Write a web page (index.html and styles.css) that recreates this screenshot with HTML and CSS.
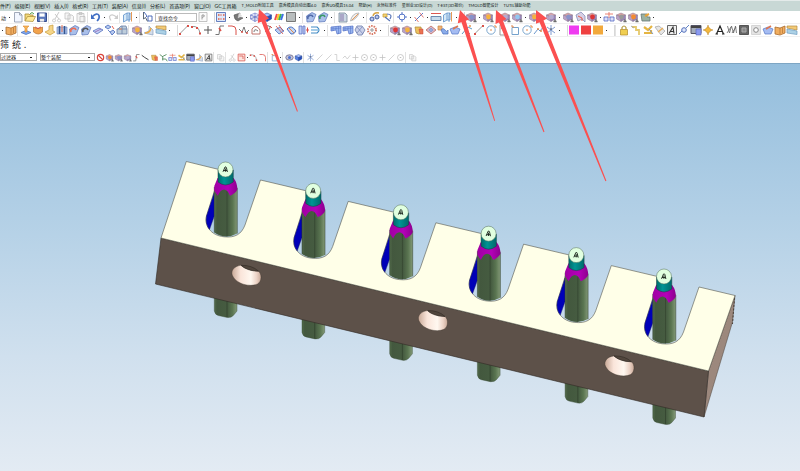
FILE: index.html
```html
<!DOCTYPE html>
<html>
<head>
<meta charset="utf-8">
<title>NX</title>
<link rel="stylesheet" href="styles.css">
</head>
<body>
<div class="app">
  <nav class="menu">
    <a href="#">件(<u>F</u>)</a><a href="#">编辑(<u>E</u>)</a><a href="#">视图(<u>V</u>)</a><a href="#">插入(<u>I</u>)</a><a href="#">格式(<u>R</u>)</a><a href="#">工具(<u>T</u>)</a><a href="#">装配(<u>A</u>)</a><a href="#">信息(<u>I</u>)</a><a href="#">分析(<u>L</u>)</a><a href="#">首选项(<u>P</u>)</a><a href="#">窗口(<u>O</u>)</a><a href="#">GC工具箱</a><a class="addon" href="#">T_MOLD附加工具</a><a class="addon" href="#">嘉秀模具自动出图4.0</a><a class="addon" href="#">嘉秀UG模具15.04</a><a class="addon" href="#">帮助(<u>H</u>)</a><a class="addon" href="#">永恒标准件</a><a class="addon" href="#">星创业3D设计(<u>D</u>)</a><a class="addon" href="#">T-EST(3D报价)</a><a class="addon" href="#">TMOLD智能设计</a><a class="addon" href="#">TUTIL辅助功能</a>
  </nav>
  <div class="bar">
    <button class="start" type="button">动</button>
    <div class="tools" data-icons=". new open save | cut copy paste | undo . redo | sheet . | pick"></div>
    <input class="search" type="text" value="查找命令" aria-label="查找命令">
    <div class="tools" data-icons="find || grid . half . wire cube rainbow square . | part partg . | slab swoosh . | gears keys | target . line . ruler sheet . || ball . ballY . ballT ballB . ballY . ballT . ball sheetR ballR . links ballG ballO puzzle ."></div>
  </div>
  <div class="bar">
    <div class="tools" data-icons=". book | extrude bowl slabY holes partO partG plane planes prism | ballY corner fold . || seg arc cross step fillet zig profile curl hatch rings mirror tube . | mesh mesh hexmesh dots . || ballR ballY pot diamond blobs boat tri seg circ pt rect circ spline spark . || magenta red orange . || | lock steps flower pen letter chain window star text noise gear nut boat book fold"></div>
  </div>
  <div class="bar groups">
    <button type="button">筛</button><button type="button">统</button><span>.</span>
  </div>
  <div class="bar filters">
    <select class="type" aria-label="过滤器"><option>过滤器</option></select>
    <select class="scope" aria-label="整个装配"><option>整个装配</option></select>
    <div class="tools small" data-icons="ban ballO ball ballT step zigk pot grab links flower window corner letter | copy | cut snap . arc fillet | rect . | eye cube | spark lineg lineg stepg zigg crossg ringg ringg crossg lineg ringg | copy"></div>
  </div>
  <main class="stage">
    <svg viewBox="0 63 800 408" role="img" aria-label="模型">
      <defs>
        <linearGradient id="pin"><stop offset="0" stop-color="#526b4b"/><stop offset=".12" stop-color="#43583e"/><stop offset=".6" stop-color="#465c41"/><stop offset=".8" stop-color="#5a7551"/><stop offset="1" stop-color="#839977"/></linearGradient>
        <linearGradient id="teal"><stop offset="0" stop-color="#006b6b"/><stop offset=".4" stop-color="#009494"/><stop offset="1" stop-color="#006a6b"/></linearGradient>
        <linearGradient id="mag"><stop offset="0" stop-color="#a000a3"/><stop offset=".6" stop-color="#b400b8"/><stop offset="1" stop-color="#8d008e"/></linearGradient>
        <linearGradient id="bore"><stop offset="0" stop-color="#c8a997"/><stop offset=".3" stop-color="#fae5da"/><stop offset=".65" stop-color="#fff8f0"/><stop offset=".85" stop-color="#ecd3c6"/><stop offset="1" stop-color="#c9aa99"/></linearGradient>
        <g id="leg"><path d="M214.3 285V311q1 4 4 4.500l9 2q4 .5 6-2l3.700-4.500V285z" fill="url(#pin)" stroke="#34462f" stroke-width=".4"/><path d="M227 285v32" stroke="#2c3a28" stroke-width=".6"/></g>
        <g id="post">
          <path d="M214.300 192.500L206.500 216Q205 224 209.500 229.500L214.300 216z" fill="#0000b8" stroke="#181850" stroke-width=".4"/>
          <path d="M214.300 187V232.500Q225 240 237.300 233.500V187z" fill="url(#pin)"/>
          <path d="M214.300 187v45.500M227 191v45.500M237.300 188v45.500" stroke="#2c3a28" stroke-width=".5" fill="none"/>
          <path d="M217.600 178L214.300 186v4.500Q216 193.500 217.800 195.700Q220.500 189.500 224 189.500Q227.500 189.500 230 195.700Q235.500 193.500 237.300 189.500Q237.500 183 233.600 178z" fill="url(#mag)"/>
          <path d="M218 170v12q7.500 6 15.300 0V170z" fill="url(#teal)" stroke="#143f3f" stroke-width=".5"/>
          <circle cx="225.500" cy="169.500" r="7.500" fill="#e1ffe0" stroke="#536b55" stroke-width=".5"/>
          <path d="M223 171.800l2-4.800q1.200-.5 1.400.6l1 4.400M223.500 170.500h3.500M225.400 168.500v3.300" fill="none" stroke="#172018" stroke-width=".9"/>
        </g>
        <g id="hole"><path d="M241 265.300C234 266 230.500 271 232.400 275.500C236 284 250 287.500 257.500 284C262 281.500 262 274 258.500 271.200Q251 271 246 268.500Q242.500 267 241 265.300z" fill="url(#bore)" stroke="#382f28" stroke-width=".4"/><path d="M241 265.300Q252 265 258.500 271.200Q247 271 241 265.300z" fill="#51463d" stroke="#211b17" stroke-width=".4"/></g>
      </defs>
      <use href="#leg"/><use href="#leg" x="87.700" y="21.400"/><use href="#leg" x="175.400" y="42.800"/><use href="#leg" x="263.100" y="64.200"/><use href="#leg" x="350.800" y="85.600"/><use href="#leg" x="438.500" y="107"/>
      <path d="M708.500 371L735 295.500L732.500 322L704 417z" fill="#9c887d" stroke="#4b4039" stroke-width=".5"/>
      <path d="M734.500 298l-2 26" stroke="#4b4039" stroke-dasharray="2 1.500"/>
      <path d="M161 238L708.500 371L704 417L155.500 284z" fill="#5d5149" stroke="#302a25" stroke-width=".6"/>
      <path d="M186.300 161.500L221 170
        l-14.500 46c-2.500 9 4 19.500 17.500 20.800c11 1.200 17.500-2.500 21-11.800l15.500-45l48.200 11.400
        l-14.500 46c-2.500 9 4 19.500 17.500 20.800c11 1.200 17.500-2.500 21-11.800l15.500-45l48.200 11.400
        l-14.500 46c-2.500 9 4 19.500 17.500 20.800c11 1.200 17.500-2.500 21-11.800l15.500-45l48.200 11.400
        l-14.500 46c-2.500 9 4 19.500 17.500 20.800c11 1.200 17.500-2.500 21-11.800l15.500-45l48.200 11.400
        l-14.500 46c-2.500 9 4 19.500 17.500 20.800c11 1.200 17.500-2.500 21-11.800l15.500-45l48.200 11.400
        l-14.500 46c-2.500 9 4 19.500 17.500 20.800c11 1.200 17.500-2.500 21-11.800l15.500-45
        L735 295.500L708.500 371L161 238z" fill="#ffffe8" stroke="#56564c" stroke-width=".6"/>
      <use href="#post"/><use href="#post" x="87.700" y="21.400"/><use href="#post" x="175.400" y="42.800"/><use href="#post" x="263.100" y="64.200"/><use href="#post" x="350.800" y="85.600"/><use href="#post" x="438.500" y="107"/>
      <use href="#hole"/><use href="#hole" x="186.500" y="45.300"/><use href="#hole" x="373" y="90.600"/>
    </svg>
  </main>
  <svg class="arrows" viewBox="0 0 800 471" aria-hidden="true">
    <g fill="#fb5050">
      <path d="M259 9L269 18.500L265.500 20.300L297.900 111.300L297 111.700L261.500 21.800L257.800 23z"/>
      <path d="M460 10L469 19.500L465.800 20.800L495.100 120.800L494.300 121.100L461.500 22.200L457.800 23.300z"/>
      <path d="M496 10L506.500 19L503 20.800L544.500 131.800L543.500 132.200L499 22.600L495.500 24z"/>
      <path d="M536 10L547 18.500L543.500 20.500L606.400 180.800L605.400 181.200L539.500 22.200L536 23.800z"/>
    </g>
  </svg>
</div>
<script src="toolbar.js"></script>
</body>
</html>
```
FILE: styles.css
```css
* { box-sizing: border-box; }
body {
  margin: 0;
  background: #fff;
  color: #222;
  font-family: Lato, "Noto Sans CJK SC", sans-serif;
  font-size: 5px;
}
.app { position: relative; display: flex; flex-direction: column; min-height: 100vh; }
.menu {
  display: flex;
  align-items: center;
  gap: 4px;
  height: 11px;
  background: #c8d8d5;
  border-top: 1px solid #e4ebea;
  white-space: nowrap;
  overflow: hidden;
}
.menu a { color: #101818; text-decoration: none; line-height: 8px; }
.menu u { text-decoration: none; }
.menu .addon { font-size: 4px; margin-left: 1px; }
.bar {
  display: flex;
  align-items: center;
  height: 13px;
  overflow: hidden;
  border-bottom: 1px solid #f0f0f0;
}
button, input, select { font: inherit; color: inherit; margin: 0; padding: 0; border: 0; background: none; }
.start { width: 7px; }
.tools { display: flex; align-items: center; flex: none; }
.tools button { display: block; width: 12px; height: 12px; }
.tools svg { display: block; width: 100%; height: 100%; }
.dot { width: 5px; display: flex; justify-content: center; }
.dot::before { content: ""; width: 1px; height: 1px; background: #333; }
.sep { width: 3px; height: 11px; border-left: 1px solid #e2e2e2; }
.sep.wide { width: 6px; border-left: 0; border-right: 1px solid #d8d8d8; }
.small button { width: 9px; height: 9px; }
.small .dot { width: 3px; }
.search { width: 42px; height: 9px; padding-left: 2px; margin-left: 1px; border: 1px solid #bbb; }
.groups { font-size: 9px; gap: 3px; height: 14px; color: #222; border: 0; }
.filters { height: 12px; border: 0; }
select {
  appearance: none;
  height: 8px;
  border: 1px solid #aaa;
  border-radius: 0;
  background: linear-gradient(#222, #222) right 4px center / 2px 1px no-repeat, #fff;
}
.type { width: 37px; }
.scope { width: 55px; margin: 0 1px 0 3px; }
.stage {
  flex: 1;
  background: linear-gradient(#94bedd, #b3d0e6 38%, #d0e0ee 72%, #e3ebf3);
  box-shadow: inset 0 1px #7ea6c4;
}
.stage svg { display: block; width: 100%; }
.arrows { position: absolute; top: 0; left: 0; width: 100%; pointer-events: none; }
```
FILE: toolbar.js
```js
// Icon shapes are drawn on a 12 x 12 grid.
const p = (d, stroke = "#777", fill = "none", w = 1) =>
  `<path d="${d}" fill="${fill}" stroke="${stroke}" stroke-width="${w}"/>`;
const box = (top, left, right, line) =>
  p("M1.500 4L6 2l4.500 2L6 6z", line, top, .5) +
  p("M1.500 4L6 6v4.500L1.500 8z", line, left, .5) +
  p("M10.500 4L6 6v4.500L10.500 8z", line, right, .5);
const ball = (c) => box("#e3a5a0", "#b9a0c6", "#9884bb", "#85758f") +
  `<circle cx="6.500" cy="6" r="2.400" fill="${c}"/>` + p("M8.500 11l1.500-3 1.500 3z", "#555", "#777", .4);
const part = (c) => p("M1.500 5L7 1.500l4 2L8 10.500 2 11z", "#5873b8", "#a9bfea", .7) +
  p("M3 8a2.500 2.500 0 0 1 5-2", c, "none", 1.600);
const sq = (c) => `<rect x="1" y="1.500" width="10" height="9" fill="${c}"/>`;

const icons = {
  new: p("M2.500 1.500h5l2.500 2.500v7H2.500zM7.500 1.500V4H10", "#8b96a8", "#f2f6ff", .8),
  open: p("M1 10V3h4l1 1h3v2", "#a98b34", "#f3d97c", .8) + p("M1 10l2.500-4.500h8L9 10.500z", "#a98b34", "#ffe894", .7) + p("M6 3q2-3 4 0", "#55a04a"),
  save: p("M1.500 2h9v8.500h-9z", "#384f8f", "#5a78bd") + p("M3.500 2.500h5v3h-5z", "#fff", "#fff", .3) + p("M4 8h4v2.500H4z", "#ddd", "#eee", .3),
  cut: p("M8 1L4 8M4 3l4 5M3 8a1.500 1.500 0 1 0 .1 0M8 8a1.500 1.500 0 1 0 .1 0", "#bbb", "none", .8),
  copy: p("M2 2h4l1 1v5H2zM5 4h4l1.500 1.500v5H5z", "#bbb", "#f6f6f6", .7),
  paste: p("M2 2.500h7v8H2zM4 1.500h3v2H4zM5 5.500h5v5.500H5z", "#bbb", "#f3f3f3", .7),
  undo: p("M2 6q5-5 7-1.500 1 3-2 5.500", "#416fc4", "none", 1.600) + p("M1 3v5h4z", "none", "#416fc4"),
  redo: p("M9.500 6q-5-4-7-.5 0 2 1.500 4", "#ccc", "none", 1.200) + p("M11 3.500V8H7z", "none", "#ccc"),
  sheet: p("M1.500 4L5 2v7L1.500 11zM5 2h3v7H5M8 2l-1 2v7", "#5d8fc9", "#d7eaf8", .8) + p("M9.500 1v9.500", "#e59a55"),
  sheetR: p("M2 4l5-3 4 4v6l-3-3-4 2z", "#8790b8", "#d8d0e5", .8) + p("M4 5l4 2v3", "#e45b4b"),
  pick: p("M2 1l3 4-1 1M6 5h4v5H6z", "#3c5fb2", "none", .9) + p("M1.500 1v7l2-1.500 2 4", "#345", "#fff", .8),
  find: p("M2 1.500h8v9H2z", "#aaa", "#fafafa", .7) + p("M5 8.500V4h2q1.500 1.500-2 2.500", "#888", "none", .8),
  grid: p("M1.500 1.500h9v9h-9z", "#4262ae", "#dfe8fa", .8) + p("M3 4h1.500M5.500 4h1M8 4h1.500M3 8h1.500M5.500 8h1M8 8h1.500", "#e05b3f", "none", 1.500),
  half: p("M2 4L8 2 7 6l4 1-5 3q-4-1-4-6z", "#555", "#777", .6) + p("M7 2l3 3-4 2z", "#ddd", "#ddd", .3),
  wire: box("#eef", "#dde", "#dde", "#4a5cbc") + p("M1.500 8L6 6l4.500 2M6 2v4", "#4a5cbc", "none", .6),
  cube: box("#a9c1ff", "#5480e8", "#244ebc", "#244089"),
  rainbow: p("M2 9l2-6", "#f04b52", "none", 2) + p("M4 9l2-6", "#ffc928", "none", 2) + p("M6 9l2-6", "#3cb94b", "none", 2) + p("M8 9l2-6", "#3e71e3", "none", 2),
  square: p("M1.500 1.500h9v9h-9z", "#777", "#b9bebe", 1),
  part: part("#5069a8"), partg: part("#389864"), partO: part("#ee6c51"), partG: part("#555"),
  slab: p("M2 2h6l2 2v7H2z", "#789", "#ccd8e5", .8) + p("M4 3v7M6 3v7", "#87a"),
  swoosh: p("M1.500 10Q3 2 10 2 8 8 1.500 10", "#aaa", "#eee", .8) + p("M3 9l6-6", "#e89a59"),
  gears: p("M1 8a2 2 0 1 0 4 0 2 2 0 1 0-4 0M6 6a2 2 0 1 0 4 0 2 2 0 1 0-4 0", "#4660a3", "#b7c6e9", 1) + p("M4 5q1-4 6-3", "#d7a342", "none", 1.400),
  keys: p("M2 3h4v3H2z", "#cba13b", "#f3d472", .8) + p("M4 6l5 4M6 3q6 0 3 5", "#5875b6", "none", 1.200),
  target: p("M3 6a3 3 0 1 0 6 0 3 3 0 1 0-6 0M6 1v3M6 8v3M1 6h3M8 6h3", "#5978c9", "none", 1),
  line: p("M2 10l8-8", "#5978c9") + p("M1.500 6l4 5M6.500 1.500l4 5", "#dc5851", "none", .8),
  ruler: p("M1 2.500h10", "#dc5851") + p("M1 5.500h10v4H1z", "#51719e", "#c7dced", .8),
  ball: ball("#8893c9"), ballY: ball("#f5b33e"), ballT: ball("#b5accf"), ballB: ball("#93c6f0"), ballR: ball("#dd3636"), ballG: ball("#999"), ballO: ball("#f28b31"),
  links: p("M1 6h4v4H1zM7 6h4v4H7z", "#5367c2", "#dce1fa", .8) + p("M2 3h8M6 1v6", "#e36552", "none", .8),
  puzzle: p("M2 3h6v3h3v4H3z", "#677", "#9bb2a1", .8) + p("M6 5l4-2", "#e6a33a", "none", 2),
  book: p("M1 3l5 1 5-2v7l-5 2-5-1z", "#a96a2c", "#f1ae60", .8) + p("M6 4v6M8.500 3.500V9", "#a96a2c", "none", .6),
  extrude: p("M1 8.500l5-2 5 2-5 2z", "#3f6cc0", "#7ea6ed", .7) + p("M3 2h6L7 4v4H5V4z", "#dd8a33", "#f6b558", .6),
  bowl: p("M1.500 3l3 1.500h3L10.500 3v5q-4 4-9 0z", "#b87230", "#f2a34c", .7) + p("M3 3q3 3 6 0", "#d64b3b"),
  slabY: p("M1 8l4-2V2l4-1v6l2 1-5 3z", "#c89c3a", "#f5d588", .7),
  holes: p("M1 3h10v7H1z", "#5877b3", "#adc3eb", .6) + p("M3.500 2v8M8.500 2v8", "#34558f", "none", 1.500) + p("M6 1v7", "#e47353"),
  plane: p("M1 7l6-3 4 2-6 4z", "#5670bc", "#c2cff4", .8) + p("M3 8l6-3", "#9a77c0"),
  planes: p("M1 3l3-2 3 2-3 2zM6 8l3-2 2 2-3 3zM4 6l2 2", "#4568ba", "#b7caf0", .8) + p("M8 2l2 3", "#e46252"),
  prism: p("M1 5h10v5H1zM2 5l3-3 5 0 1 3M6 2v8", "#6982a8", "#becddb", .8) + p("M3 5h3", "#e58a53"),
  corner: p("M1 9l5-2V2l4 4v5z", "#8ca0be", "#d3ddeb", .7) + p("M2 9q5 0 6-5", "#edab46", "none", 1.400),
  fold: p("M1 2h10v4L1 4z", "#b58a40", "#f3cb77", .7) + p("M1 5l10 2v3.500L1 9z", "#6d9cc0", "#acd1e6", .7),
  seg: p("M2 9.500l8-8", "#999") + p("M1 9h2v2H1zM9 1h2v2H9z", "none", "#d95149"),
  arc: p("M2 2.500q7-1 8 7", "#999") + p("M1 2h2v2H1zM9 8.500h2v2H9zM6 3h2v2H6z", "none", "#d95149"),
  cross: p("M6 2v8M2 6h8", "#555"),
  step: p("M1.500 10.500H5L6 2h4", "#777") + p("M5 4l2 3", "#d95149", "none", 1.500),
  fillet: p("M2 2h4q4 0 4 4v5", "#d95149"),
  zig: p("M1 5l3 3 2-5 2 6 3-3", "#777") + p("M3 8h2M8 9h2", "#d95149", "none", 1.500),
  zigk: p("M1 3l4 3 5 3", "#333", "none", 1.200),
  profile: p("M2 10V5q4-6 8 1v4z", "#c0736b") + p("M4 8q0-4 4-1", "#777"),
  curl: p("M2 2q7-1 6 2T4 7t5 3", "#777") + p("M8 2l2 2", "#d95149"),
  hatch: p("M1 6l5-3 4 4-5 3z", "#4c72bf", "#b9cdf2", .8) + p("M2 2l7 8M5 1l4 6", "#d95149", "none", .8),
  rings: p("M1 5q4-5 9 2-2 4-5 3z", "#4c72bf", "#c6d6f3") + p("M3 4l5 5", "#df884b"),
  mirror: p("M1 2h3v8H1zM5 2h2v8H5z", "#536cc0", "#bdcdf6", .7) + p("M8 6h3M9.500 3.500v5", "#d95149"),
  tube: p("M1 3h6q4 3 0 6H1", "#438bc5", "none", 1.200) + p("M1 6h8", "#7db6df", "none", 1.400),
  mesh: p("M1 3l10-1v7l-4 1-1-4-5 1z", "#526fc5", "#98b5f0", .7) + p("M3 3v4M6 3v3M8.500 2v8M1 5l10-1", "#5370c4", "none", .5),
  hexmesh: p("M3 2h5l3 4-3 5H4L1 6z", "#8390b9", "#cbd1e9") + p("M3 3l6 7M8 3l-5 6", "#6274af", "none", .6),
  dots: `<circle cx="6" cy="6" r="4" fill="none" stroke="#d87b66" stroke-width="2" stroke-dasharray="1.500 1"/>` + p("M4 6h4M6 4v4", "#999"),
  pot: p("M2 3h6l1 6q-3 2-6 0z", "#ab883b", "#eec15d", .7) + p("M6 5h4v5H7z", "#c44a39", "#ea7252", .5),
  diamond: p("M1 6l5-4 5 4-5 4z", "#c06c61", "#d4b7ca", .8) + p("M4 6l2-2 2 2-2 2z", "#7687c0", "#95abdd", .5),
  blobs: p("M1 2h4v4H1z", "#cc8749", "#efb275", .7) + p("M4 6q2-3 4 0t3 0v4H6z", "#476dba", "#8badeb", .7),
  boat: p("M1 5l5-2 5 2-2 5H3z", "#5577c5", "#a5bcf2", .7) + p("M4 5l5-3", "#dc7752", "none", 1.600),
  tri: p("M1 10L7 3l4 2M3 5l6 5", "#5e9ac5") + p("M8 2h2M5 7h2", "#e59a55", "none", 1.600),
  circ: `<circle cx="6" cy="6" r="4.200" fill="none" stroke="#7fa9cf"/>` + p("M6 5v2M9 2h2v2", "#e08b4d"),
  pt: p("M2 2h3M3 3v8h7L5 5", "#999") + p("M4 4h2", "#d95149", "none", 1.500),
  rect: p("M3 3.500h6.500v7H3z", "#74a1cb") + p("M2 2h2v2", "#df8448"),
  spline: p("M1 10l4-5 2 2 4-5", "#6b97cc") + p("M4 5h2M7 7h2", "#e08b4d", "none", 1.500),
  spark: p("M6 1v10M2 3l8 6M10 3L2 9", "#7e9ad0", "none", 1) + p("M5 5h2", "#555"),
  magenta: sq("#ef3bf0"), red: sq("#ef4040"), orange: sq("#f2a93c"),
  lock: p("M4 5.500V3.500q2-3 4 0v2", "#b59a3f", "none", 1.200) + p("M2.500 5.500h7V11h-7z", "#b18a25", "#f0ce50", .7),
  steps: p("M2 3h4v3h3v5", "#e5c96d", "none", 1.800) + p("M1 2l3 2", "#aaa"),
  flower: p("M2 3l4 3 4-4M2 9h7V6", "#e5b543", "none", 2.200) + p("M7 5l4 5", "#7c94bb"),
  pen: p("M1 3l4-1 6 5-4 4z", "#b7b7b7", "#e6e6e6") + p("M4 8l5-4", "#e9af57", "none", 1.500),
  letter: p("M1.500 1.500h9v9h-9z", "#666", "#eee") + p("M3 9.500L7 3l1 6.500M4.500 7.500H8", "#333", "none", 1.100),
  chain: p("M1 10l3-3M8 4l3-3", "#6282c3") + `<circle cx="6" cy="6" r="2.300" fill="#dce7fc" stroke="#546fba"/>`,
  window: p("M1 1.500h10v8H1z", "#556", "#a4adbb") + p("M1 3h10", "#444", "none", 2) + p("M6 5h5v6H6z", "#5260bb", "#8b9af0", .6),
  star: p("M6 1v10M1 6h10", "#c28928", "none", 1) + p("M6 2.500L9.500 6 6 9.500 2.500 6z", "#c28928", "#f4b83c", .7),
  text: p("M2.500 10L6 2l3.500 8M4 7.500h4M1.500 10h2.500M8 10h2.500", "#222", "none", 1.200),
  noise: p("M1.500 2l2 7 2-7 2 7 2-7 1 7M1 9l4-6M6 9l4-6", "#666", "none", .8),
  gear: p("M1.500 1.500h9v9h-9z", "#555", "#666") + p("M4 4h4v4H4z", "#aaa", "#888"),
  nut: p("M1.500 1.500h9v9h-9z", "#d5d5d5", "#e4e4e4") + `<circle cx="6" cy="6" r="2.300" fill="#fff" stroke="#888"/>`,
  ban: `<circle cx="6" cy="6" r="4.200" fill="#fff" stroke="#d9443c" stroke-width="1.600"/>` + p("M3 3l6 6", "#d9443c", "none", 1.500),
  grab: p("M1 2l4 3v5M4 5l6-3M4 8h5l2 3", "#578e63", "none", 1.200),
  snap: p("M1.500 1.500h9v9h-9z", "#d95149", "#fbe4df") + p("M3 4h5v4", "#d95149"),
  eye: `<ellipse cx="6" cy="6" rx="5" ry="3.600" fill="#c8c4d5" stroke="#668"/><circle cx="6" cy="6" r="2" fill="#4c72d3"/>`,
  lineg: p("M2 10l8-8", "#c5c5c5"), stepg: p("M2 2h3v8h4", "#c5c5c5"), zigg: p("M1 7l3-3 3 4 4-5", "#c5c5c5"),
  crossg: p("M6 2v8M2 6h8", "#c0c0c0"),
  ringg: `<circle cx="6" cy="6" r="4" fill="none" stroke="#bbb"/>` + p("M5 6h2", "#aaa")
};

const parts = { ".": '<span class="dot"></span>', "|": '<span class="sep"></span>', "||": '<span class="sep wide"></span>' };
for (const row of document.querySelectorAll("[data-icons]")) {
  row.innerHTML = row.dataset.icons.trim().split(/\s+/).map((name) =>
    parts[name] || `<button type="button" aria-label="${name}"><svg viewBox="0 0 12 12">${icons[name]}</svg></button>`
  ).join("");
}
```
